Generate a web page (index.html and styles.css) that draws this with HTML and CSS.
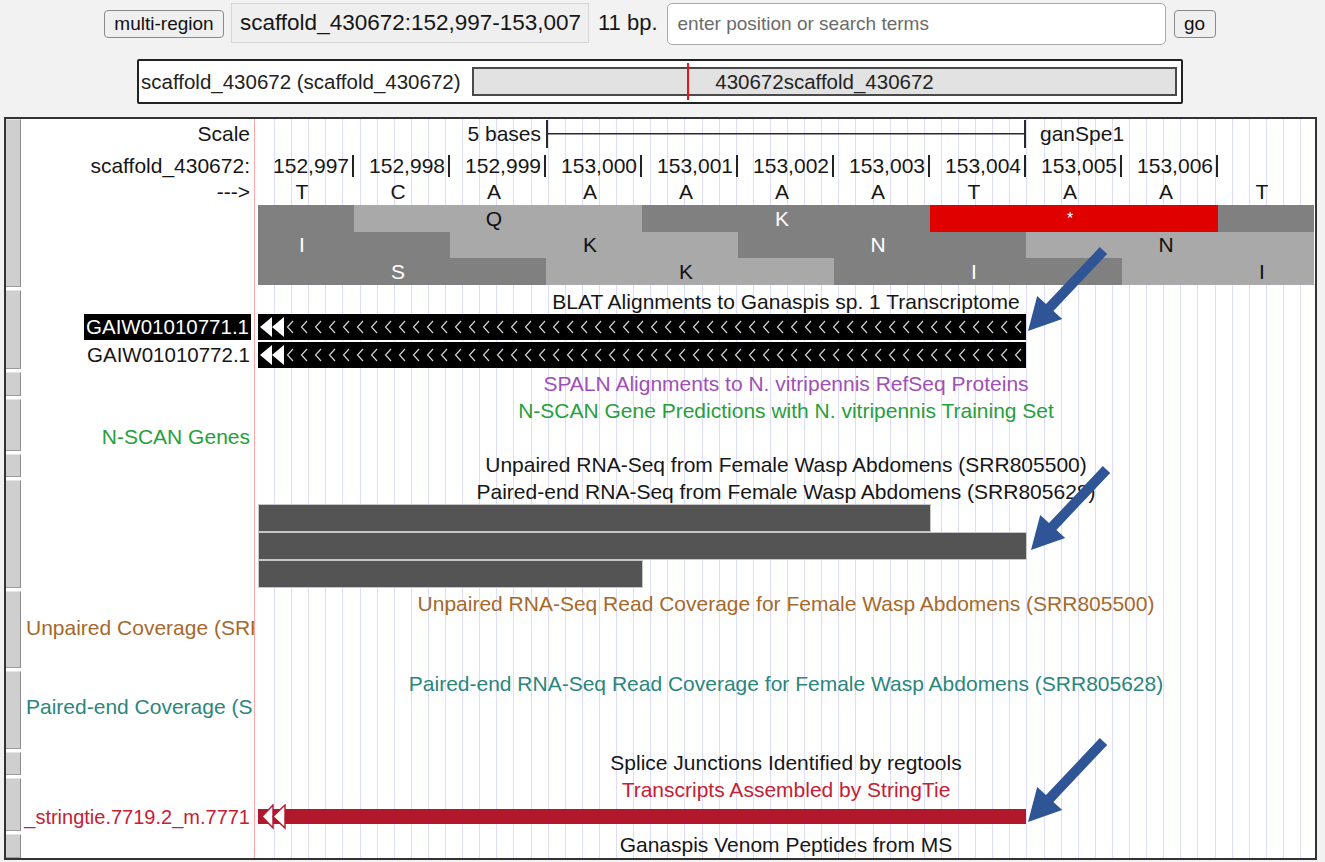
FILE: index.html
```html
<!DOCTYPE html>
<html>
<head>
<meta charset="utf-8">
<title>Genome Browser</title>
<link rel="stylesheet" href="styles.css">
</head>
<body>
<div class="top">
  <button class="btn multi">multi-region</button>
  <div class="pos">scaffold_430672:152,997-153,007</div>
  <div class="bp">11 bp.</div>
  <input class="search" type="text" placeholder="enter position or search terms">
  <button class="btn go">go</button>
</div>

<div class="chrom">
  <span class="chrom-name">scaffold_430672 (scaffold_430672)</span>
  <div class="ideo"><span class="ideo-mark"></span>430672scaffold_430672</div>
</div>

<div class="img">
  <!-- base position / scale / codons -->
  <div class="track t-base">
    <div class="side"></div>
    <div class="labels">
      <div class="r-scale">Scale</div>
      <div class="r-ruler">scaffold_430672:</div>
      <div class="h26">---&gt;</div>
    </div>
    <div class="data">
      <div class="scale-row">
        <div class="sc-lab">5 bases</div>
        <div class="bracket"></div>
        <div class="asm">ganSpe1</div>
      </div>
      <div class="ruler">
        <span>152,997</span><span>152,998</span><span>152,999</span><span>153,000</span><span>153,001</span><span>153,002</span><span>153,003</span><span>153,004</span><span>153,005</span><span>153,006</span>
      </div>
      <div class="bases">
        <span>T</span><span>C</span><span>A</span><span>A</span><span>A</span><span>A</span><span>A</span><span>T</span><span>A</span><span>A</span><span>T</span>
      </div>
      <div class="codons f1 h27"><span class="dk"></span><span class="lt">Q</span><span class="dk">K</span><span class="stop">*</span><span class="dk"></span></div>
      <div class="codons f2 h26"><span class="dk">I</span><span class="lt">K</span><span class="dk">N</span><span class="lt">N</span></div>
      <div class="codons f3 h27"><span class="dk">S</span><span class="lt">K</span><span class="dk">I</span><span class="lt">I</span></div>
    </div>
  </div>

  <!-- BLAT -->
  <div class="track t-blat">
    <div class="side"></div>
    <div class="labels gaiw">
      <div class="h24"></div>
      <div class="h26"><span class="hl">GAIW01010771.1</span></div>
      <div class="h26 mt2">GAIW01010772.1</div>
    </div>
    <div class="data">
      <div class="h24 title">BLAT Alignments to Ganaspis sp. 1 Transcriptome</div>
      <svg class="feat" width="768" height="26" viewBox="0 0 768 26">
        <defs>
          <pattern id="chev" x="28" y="0" width="14" height="26" patternUnits="userSpaceOnUse">
            <path d="M7 7 L1.5 13 L7 19" fill="none" stroke="#d2d2d2" stroke-width="1.2"/>
          </pattern>
        </defs>
        <rect x="0" y="0" width="768" height="26" fill="#000"/>
        <rect x="28" y="0" width="740" height="26" fill="url(#chev)"/>
        <polygon points="2,13 14,3 14,23" fill="#fff"/>
        <polygon points="14,13 26,3 26,23" fill="#fff"/>
      </svg>
      <svg class="feat mt2" width="768" height="26" viewBox="0 0 768 26">
        <rect x="0" y="0" width="768" height="26" fill="#000"/>
        <rect x="28" y="0" width="740" height="26" fill="url(#chev)"/>
        <polygon points="2,13 14,3 14,23" fill="#fff"/>
        <polygon points="14,13 26,3 26,23" fill="#fff"/>
      </svg>
    </div>
  </div>

  <!-- SPALN -->
  <div class="track t-spaln">
    <div class="side"></div>
    <div class="labels"></div>
    <div class="data">
      <div class="h24 title purple">SPALN Alignments to N. vitripennis RefSeq Proteins</div>
    </div>
  </div>

  <!-- N-SCAN -->
  <div class="track t-nscan">
    <div class="side"></div>
    <div class="labels">
      <div class="h25"></div>
      <div class="h26 green">N-SCAN Genes</div>
    </div>
    <div class="data">
      <div class="h23 title green">N-SCAN Gene Predictions with N. vitripennis Training Set</div>
    </div>
  </div>

  <!-- Unpaired RNA-Seq -->
  <div class="track t-unp">
    <div class="side"></div>
    <div class="labels"></div>
    <div class="data">
      <div class="h22 title">Unpaired RNA-Seq from Female Wasp Abdomens (SRR805500)</div>
    </div>
  </div>

  <!-- Paired-end RNA-Seq -->
  <div class="track t-pair">
    <div class="side"></div>
    <div class="labels"></div>
    <div class="data">
      <div class="h24 title">Paired-end RNA-Seq from Female Wasp Abdomens (SRR805628)</div>
      <div class="read w672"></div>
      <div class="read w768"></div>
      <div class="read w384"></div>
    </div>
  </div>

  <!-- Unpaired coverage -->
  <div class="track t-ucov">
    <div class="side"></div>
    <div class="labels">
      <div class="h26"></div>
      <div class="h22 left brown">Unpaired Coverage (SRR805500)</div>
    </div>
    <div class="data">
      <div class="h26 title brown">Unpaired RNA-Seq Read Coverage for Female Wasp Abdomens (SRR805500)</div>
    </div>
  </div>

  <!-- Paired coverage -->
  <div class="track t-pcov">
    <div class="side"></div>
    <div class="labels">
      <div class="h25"></div>
      <div class="h22 left teal">Paired-end Coverage (SRR805628)</div>
    </div>
    <div class="data">
      <div class="h26 title teal">Paired-end RNA-Seq Read Coverage for Female Wasp Abdomens (SRR805628)</div>
    </div>
  </div>

  <!-- Splice -->
  <div class="track t-splice">
    <div class="side"></div>
    <div class="labels"></div>
    <div class="data">
      <div class="h22 title">Splice Junctions Identified by regtools</div>
    </div>
  </div>

  <!-- StringTie -->
  <div class="track t-string">
    <div class="side"></div>
    <div class="labels">
      <div class="h26"></div>
      <div class="h26 red end st-lab"><span>_stringtie.7719.2_m.7771</span></div>
    </div>
    <div class="data">
      <div class="h24 title red">Transcripts Assembled by StringTie</div>
      <svg class="feat mt2" width="768" height="26" viewBox="0 0 768 26">
        <rect x="0" y="5" width="768" height="15" fill="#b2182b"/>
        <polygon points="4,12.5 15,1 15,24" fill="#fff" stroke="#b2182b" stroke-width="1.4"/>
        <polygon points="15,12.5 27,1 27,24" fill="#fff" stroke="#b2182b" stroke-width="1.4"/>
      </svg>
    </div>
  </div>

  <!-- Venom -->
  <div class="track t-venom">
    <div class="side"></div>
    <div class="labels"></div>
    <div class="data">
      <div class="h22 title">Ganaspis Venom Peptides from MS</div>
    </div>
  </div>
</div>

<svg class="arrows" width="1325" height="862" viewBox="0 0 1325 862">
  <defs>
    <polygon id="blue-arrow" points="1028,331 1062.2,319 1053.4,310.9 1107.2,253.9 1099.8,247.1 1046,304.1 1037.2,296"/>
  </defs>
  <use href="#blue-arrow" fill="#2f5597"/>
  <use href="#blue-arrow" fill="#2f5597" transform="translate(3,219)"/>
  <use href="#blue-arrow" fill="#2f5597" transform="translate(0,491)"/>
</svg>
</body>
</html>
```

FILE: styles.css
```css
* { box-sizing: border-box; }

body {
  margin: 0;
  width: 1325px;
  height: 862px;
  overflow: hidden;
  position: relative;
  background: #f2f2f2;
  font-family: "Liberation Sans", Arial, sans-serif;
  color: #161616;
}

/* ---------- top controls ---------- */
.top {
  display: flex;
  align-items: flex-start;
  height: 45px;
  padding: 3px 0 0 104px;
}
.btn {
  margin-top: 7px;
  height: 28px;
  padding: 0;
  border: 1px solid #8a8a8a;
  border-radius: 4px;
  background: #efefef;
  font-family: "Liberation Sans", Arial, sans-serif;
  font-size: 19px;
  color: #111;
}
.multi { width: 120px; }
.go { width: 42px; margin-left: 8px; }
.pos {
  margin-left: 7px;
  width: 358px;
  height: 40px;
  padding-left: 8px;
  background: #efefef;
  border: 1px solid #d6d6d6;
  font-size: 22.5px;
  line-height: 38px;
  white-space: nowrap;
}
.bp {
  margin-left: 9px;
  font-size: 22px;
  line-height: 40px;
}
.search {
  margin: 0 0 0 9px;
  width: 499px;
  height: 42px;
  padding: 0 10px;
  border: 1px solid #a9a9a9;
  border-radius: 5px;
  background: #fff;
  font-family: "Liberation Sans", Arial, sans-serif;
  font-size: 19px;
}
.search::placeholder { color: #6b6b6b; }

/* ---------- chromosome ideogram ---------- */
.chrom {
  display: flex;
  align-items: center;
  margin: 14px 0 0 137px;
  width: 1046px;
  height: 45px;
  padding: 0 4px 0 2px;
  border: 2px solid #222;
  border-radius: 2px;
  background: #fff;
}
.chrom-name {
  font-size: 20.5px;
  color: #222;
  white-space: nowrap;
}
.ideo {
  position: relative;
  margin-left: auto;
  width: 705px;
  height: 29px;
  border: 2px solid #4a4a4a;
  background: #e2e2e2;
  text-align: center;
  font-size: 20.5px;
  line-height: 25px;
  color: #222;
}
.ideo-mark {
  position: absolute;
  left: 213px;
  top: -6px;
  width: 2px;
  height: 37px;
  background: #e8141a;
}

/* ---------- browser image ---------- */
.img {
  margin: 13px 0 0 4px;
  width: 1313px;
  height: 743px;
  border: 2px solid #333;
  background-color: #fff;
  background-image:
    linear-gradient(#ffa6a6, #ffa6a6),
    repeating-linear-gradient(to right, transparent 0 16.1px, #dcdcff 16.1px 17.1px);
  background-size: 1px 100%, 1056px 100%;
  background-position: 248px 0, 252px 0;
  background-repeat: no-repeat;
  overflow: hidden;
}

.track {
  display: grid;
  grid-template-columns: 15px 233px 4px 1056px;
  font-size: 21px;
}
.t-base { height: 171px; }
.t-blat { height: 82px; }
.t-spaln { height: 27px; }
.t-nscan { height: 55px; }
.t-unp { height: 26px; }
.t-pair { height: 111px; }
.t-ucov { height: 80px; }
.t-pcov { height: 81px; }
.t-splice { height: 26px; }
.t-string { height: 56px; }
.t-venom { height: 24px; }

.side {
  grid-column: 1;
  margin-bottom: 3px;
  background: #cfcfcf;
  border-right: 1px solid #8c8c8c;
  border-bottom: 1px solid #9a9a9a;
  border-top: 1px solid #e6e6e6;
}
.t-venom .side { margin-bottom: 0; }

.labels {
  grid-column: 2;
  display: flex;
  flex-direction: column;
  padding-right: 4px;
  text-align: right;
  white-space: nowrap;
  overflow: hidden;
  color: #161616;
}
.labels.gaiw { font-size: 20.5px; }
.labels .left {
  text-align: left;
  padding-left: 5px;
  margin-right: -300px;
}
.labels .end {
  display: flex;
  justify-content: flex-end;
}
.labels .st-lab { font-size: 20px; }

.data {
  grid-column: 4;
  display: flex;
  flex-direction: column;
  white-space: nowrap;
}

.h22 { flex: 0 0 22px; line-height: 22px; }
.h23 { flex: 0 0 23px; line-height: 23px; }
.h24 { flex: 0 0 24px; line-height: 24px; }
.h25 { flex: 0 0 25px; line-height: 25px; }
.h26 { flex: 0 0 26px; line-height: 26px; }
.h27 { flex: 0 0 27px; line-height: 27px; }
.mt2 { margin-top: 2px; }

.title { text-align: center; }
.purple { color: #a04fb6; }
.green { color: #26a03a; }
.brown { color: #a5692c; }
.teal { color: #2b867b; }
.red { color: #c52033; }

.hl {
  display: inline-block;
  margin-right: -1px;
  padding: 0 2px;
  background: #000;
  color: #fff;
  line-height: 26px;
}

/* scale / ruler */
.r-scale { flex: 0 0 28px; margin-top: 1px; line-height: 28px; }
.r-ruler { flex: 0 0 26px; margin-top: 5px; line-height: 26px; }

.scale-row {
  display: flex;
  flex: 0 0 28px;
  margin-top: 1px;
  line-height: 28px;
}
.sc-lab {
  flex: 0 0 288px;
  text-align: right;
  padding-right: 5px;
}
.bracket {
  flex: 0 0 480px;
  border-left: 2px solid #2a2a2a;
  border-right: 2px solid #2a2a2a;
  background: linear-gradient(#2a2a2a, #2a2a2a) 0 13px / 100% 1.5px no-repeat;
}
.asm { padding-left: 14px; }

.ruler {
  display: flex;
  align-items: center;
  flex: 0 0 26px;
  margin-top: 5px;
}
.ruler span {
  flex: 0 0 96px;
  height: 22px;
  line-height: 22px;
  text-align: right;
  padding-right: 3px;
  border-right: 2px solid #222;
}

.bases {
  display: flex;
  flex: 0 0 26px;
  line-height: 26px;
}
.bases span {
  flex: 0 0 96px;
  text-align: center;
  padding-right: 8px;
}

.codons {
  display: flex;
  overflow: hidden;
}
.codons span {
  flex: 0 0 288px;
  text-align: center;
  padding-right: 8px;
}
.f1 span:first-child { margin-left: -192px; }
.f2 span:first-child { margin-left: -96px; }
.dk { background: #808080; color: #fff; }
.lt { background: #a9a9a9; color: #111; }
.stop { background: #e00000; color: #fff; font-size: 16px; }

.feat { display: block; flex: 0 0 auto; }

.read {
  flex: 0 0 28px;
  background: #545454;
  border: 1px solid #c6c6c6;
}
.w672 { width: 673px; }
.w768 { width: 769px; }
.w384 { width: 385px; }

.arrows {
  position: absolute;
  left: 0;
  top: 0;
  pointer-events: none;
}
```
